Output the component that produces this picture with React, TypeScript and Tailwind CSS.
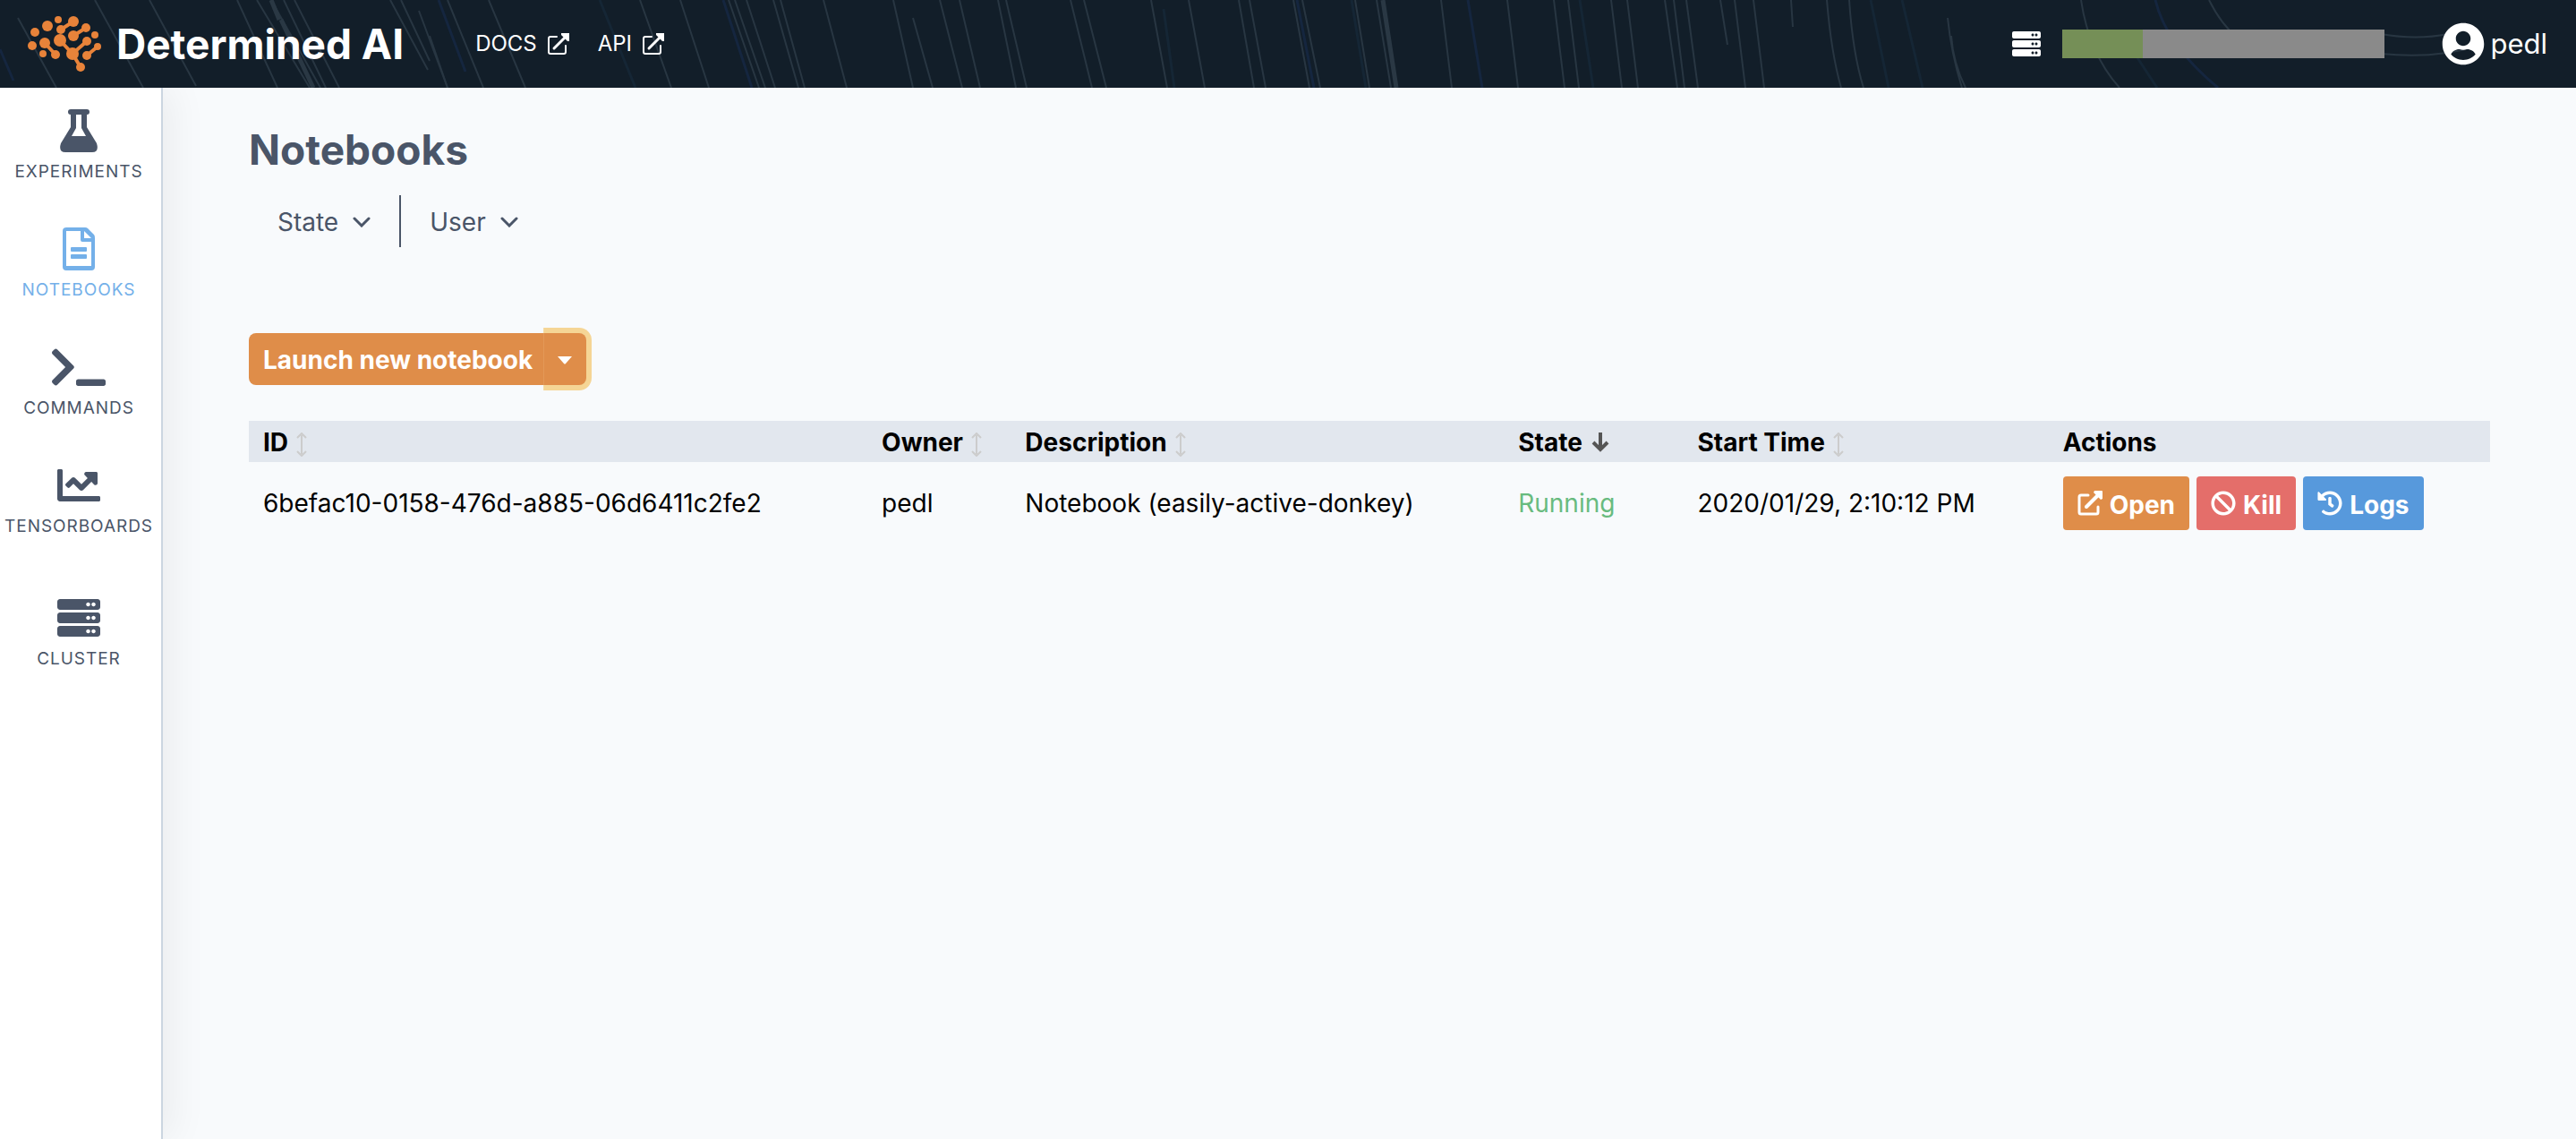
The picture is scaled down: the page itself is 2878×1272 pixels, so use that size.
import type { ReactNode } from "react";
import { FaServer, FaChartLine, FaTerminal, FaUserCircle, FaBan, FaHistory } from "react-icons/fa";

type IconProps = { className?: string };

function Logo({ className }: IconProps) {
  const dots: [number, number, number][] = [
    [65, 21, 4], [53, 28, 6], [82, 23, 6], [96, 30, 5], [68, 32, 5], [39, 35, 5],
    [106, 38, 4], [82, 39, 6], [36, 50, 5], [50, 47, 6], [67, 44, 7], [97, 45, 5],
    [109, 51, 4], [48, 59, 4], [62, 60, 5], [81, 59, 7], [97, 61, 5], [90, 74, 5],
  ];
  return (
    <svg viewBox="31 16 83 64" className={className} fill="#e8833a" stroke="#e8833a" aria-hidden="true">
      {dots.map(([x, y, r]) => (
        <circle key={`${x}-${y}`} cx={x} cy={y} r={r} strokeWidth="0" />
      ))}
      <path d="M82 23L68 32M96 30L82 39M50 47L62 60M67 44L81 59L97 45M81 59L90 74M109 51L97 61" strokeWidth="4" fill="none" />
    </svg>
  );
}

function External({ className }: IconProps) {
  return (
    <svg viewBox="0 0 24 24" className={className} fill="none" stroke="currentColor" aria-hidden="true">
      <path d="M10 4H3Q1 4 1 6V21Q1 23 3 23H18Q20 23 20 21V14" strokeWidth="2" strokeLinecap="round" />
      <path d="M7 17L21 3" strokeWidth="3" strokeLinecap="round" />
      <path d="M15 0H24V9H22L15 2Z" fill="currentColor" strokeWidth="0" />
    </svg>
  );
}

function ExternalBold({ className }: IconProps) {
  return (
    <svg viewBox="0 0 28 28" className={className} fill="none" stroke="currentColor" aria-hidden="true">
      <path d="M12 5H4Q2 5 2 7V24Q2 26 4 26H21Q23 26 23 24V18" strokeWidth="3" strokeLinecap="round" />
      <path d="M10 18L23 5" strokeWidth="4" strokeLinecap="round" />
      <path d="M19 0H27Q28 0 28 1V9L26 10L18 2Z" fill="currentColor" strokeWidth="0" />
    </svg>
  );
}

function Flask({ className }: IconProps) {
  return (
    <svg viewBox="0 0 42 48" className={className} fill="currentColor" aria-hidden="true">
      <path fillRule="evenodd" d="M12 0H30Q33 0 33 3Q33 6 30 6V20L41 38Q44 48 36 48H6Q-2 48 1 38L12 20V6Q9 6 9 3Q9 0 12 0ZM18 6V21L13 30H29L24 21V6Z" />
    </svg>
  );
}

function Doc({ className }: IconProps) {
  return (
    <svg viewBox="0 0 36 48" className={className} fill="currentColor" aria-hidden="true">
      <path fillRule="evenodd" d="M4 0H25Q27 0 28 1L35 8Q36 9 36 12V44Q36 48 32 48H4Q0 48 0 44V4Q0 0 4 0ZM4 4V43H32V16H22Q20 16 20 14V4ZM24 4V12H32Z" />
      <rect x="9" y="22" width="18" height="5" rx="1" />
      <rect x="9" y="30" width="18" height="5" rx="1" />
    </svg>
  );
}

function Chevron({ className }: IconProps) {
  return (
    <svg viewBox="0 0 20 12" className={className} fill="none" stroke="currentColor" strokeWidth="3" strokeLinecap="round" aria-hidden="true">
      <path d="M2 2L10 10L18 2" strokeLinejoin="miter" />
    </svg>
  );
}

function SortBoth() {
  return (
    <svg viewBox="0 0 14 27" className="mt-1 ml-2 h-[27px] w-3.5 shrink-0 text-[#cccccc]" fill="none" stroke="currentColor" strokeWidth="2" aria-hidden="true">
      <path d="M7 3V24" />
      <path d="M2 6L7 1L12 6M2 21L7 26L12 21" />
    </svg>
  );
}

function SortDown() {
  return (
    <svg viewBox="0 0 20 22" className="ml-2.5 h-[22px] w-5 shrink-0 text-[#555555]" fill="none" stroke="currentColor" strokeWidth="4" aria-hidden="true">
      <path d="M10 0V19M2 11L10 19L18 11" />
    </svg>
  );
}

const streaks = [
  "M106 0L160 98M167 0L219 96M20 20L63 98M287 0L346 98M303 0L358 98M317 0L364 98M329 0L379 98M265 0L310 98M436 0L478 78M448 0L480 68M468 12L500 98",
  "M500 0L540 98M480 40L500 98M546 0L587 98M715 0L750 98M760 0L792 98M814 0L848 98M821 0L855 98M834 0L866 98M864 0L892 98M872 0L899 98M920 0L946 98M998 0L1020 98M1020 20L1042 98M1050 0L1075 98M1072 0L1095 98M1115 0L1135 98M1124 0L1147 98",
  "M1196 0L1220 98M1211 0L1236 98M1286 0L1304 98M1328 0L1346 98M1384 0L1401 98M1396 0L1414 98M1445 0L1463 98M1455 0L1475 98M1514 0L1530 98M1538 0L1554 98M1610 0L1622 98M1684 0L1696 98M1736 0L1748 98M1752 0L1764 98M1800 0L1812 98M1818 0L1830 98M1860 0L1874 98M1870 0L1882 98M1884 0L1897 98M1922 0L1930 50M1938 0L1950 98M1959 0L1971 98M2001 0L2003 30",
  "M2041 0Q2046 60 2057 98M2066 0Q2070 60 2082 98M2176 20Q2180 60 2192 98M2325 0Q2334 60 2368 98M2180 40Q2182 70 2196 98M2468 0Q2482 28 2500 42M2660 38Q2700 45 2735 38M2660 60Q2720 66 2765 52",
];

function Streaks() {
  return (
    <svg viewBox="0 0 2878 98" preserveAspectRatio="none" className="absolute inset-0 h-full w-full" fill="none" aria-hidden="true">
      {streaks.map((d) => (
        <path key={d} d={d} stroke="#283642" strokeWidth="2" />
      ))}
      <path d="M303 0L312 22M314 22L350 98M1545 0L1560 98" stroke="#2a3844" strokeWidth="5" />
      <path d="M808 0L840 98M1449 0L1468 98M1640 0L1656 98M2408 0Q2420 50 2478 98M490 0L520 80M0 55L15 90" stroke="#15263f" strokeWidth="3" />
      <path d="M670 0L710 98M1300 10L1312 98M1510 0L1526 98M1765 0L1780 98M2090 0L2110 98M2125 0L2148 98M2385 60L2410 98" stroke="#152635" strokeWidth="3" />
    </svg>
  );
}

function NavItem({ label, active, tall, children }: { label: string; active?: boolean; tall?: boolean; children: ReactNode }) {
  return (
    <a href="#" className={`flex flex-col items-center ${tall ? "mt-4" : ""} ${active ? "text-[#74b0e9]" : "text-[#4a5568]"}`}>
      <span className="flex h-12 items-center">{children}</span>
      <span className="mt-2 mb-12 text-[19px] leading-7 tracking-wider">{label}</span>
    </a>
  );
}

const columns = [
  { name: "ID", sort: "both" },
  { name: "Owner", sort: "both" },
  { name: "Description", sort: "both" },
  { name: "State", sort: "down" },
  { name: "Start Time", sort: "both" },
  { name: "Actions", sort: "" },
];

export default function App() {
  return (
    <div className="flex min-h-screen flex-col bg-[#f8fafc] font-['Inter',sans-serif] text-[28px] leading-[42px] text-black">
      <header className="relative h-[98px] bg-[#121e29] text-white">
        <Streaks />
        <div className="relative flex h-full items-center pr-8 pl-[31px]">
          <Logo className="h-16 w-[83px]" />
          <span className="ml-4 text-[46px] font-bold">Determined AI</span>
          <nav className="ml-20 flex gap-8 text-2xl">
            <a href="#" className="flex items-center gap-3">DOCS <External className="size-6" /></a>
            <a href="#" className="flex items-center gap-3">API <External className="size-6" /></a>
          </nav>
          <FaServer className="mr-6 ml-auto size-8" />
          <div className="h-8 w-[360px] bg-[#8a8a8a]" role="img" aria-label="Cluster usage">
            <div className="h-full w-1/4 bg-[#758f57]" />
          </div>
          <button className="ml-16 flex items-center gap-1.5 text-[31px]">
            <FaUserCircle className="size-12" />
            pedl
          </button>
        </div>
      </header>
      <div className="flex flex-1">
        <aside className="w-[182px] shrink-0 border-r-2 border-[#cbd5e0] bg-white pt-6 pr-1 shadow-[10px_0_40px_rgba(0,0,0,0.06)]">
          <NavItem label="EXPERIMENTS"><Flask className="h-12 w-[42px]" /></NavItem>
          <NavItem label="NOTEBOOKS" active><Doc className="h-12 w-9" /></NavItem>
          <NavItem label="COMMANDS"><FaTerminal className="h-12 w-[60px]" /></NavItem>
          <NavItem label="TENSORBOARDS"><FaChartLine className="size-12" /></NavItem>
          <NavItem label="CLUSTER" tall><FaServer className="size-12" /></NavItem>
        </aside>
        <main className="flex-1 pt-10 pr-24 pl-24">
          <h1 className="text-[46px] leading-[58px] font-bold text-[#4a5568]">Notebooks</h1>
          <div className="mt-[22px] flex h-[58px] text-[#4a5568]">
            <button className="flex items-center gap-4 border-r-2 border-[#4a5568] px-8 pt-0.5">State <Chevron className="h-3 w-5" /></button>
            <button className="flex items-center gap-4 px-8 pt-0.5">User <Chevron className="h-3 w-5" /></button>
          </div>
          <div className="mt-24 flex h-[58px] text-white">
            <button className="rounded-l-lg bg-[#df8d49] pt-0.5 pr-3 pl-4 font-bold">Launch new notebook</button>
            <button aria-label="More launch options" className="flex w-12 items-center justify-center rounded-r-lg bg-[#df8d49] pt-0.5 shadow-[0_0_0_6px_#f5d595] [clip-path:inset(-6px_-6px_-6px_0)]">
              <svg viewBox="0 0 16 9" className="h-[9px] w-4" fill="currentColor" aria-hidden="true"><path d="M0 0H16L9 8Q8 9 7 8Z" /></svg>
            </button>
          </div>
          <table className="mt-10 w-full table-fixed text-left">
            <colgroup>
              <col className="w-[27.6%]" />
              <col className="w-[6.4%]" />
              <col className="w-[22%]" />
              <col className="w-[8%]" />
              <col className="w-[16.3%]" />
              <col />
            </colgroup>
            <thead className="bg-[#e2e7ee]">
              <tr>
                {columns.map((c) => (
                  <th key={c.name} className="h-[46px] pt-0.5 pl-4 font-bold whitespace-nowrap">
                    <span className="flex items-center">{c.name}{c.sort === "both" && <SortBoth />}{c.sort === "down" && <SortDown />}</span>
                  </th>
                ))}
              </tr>
            </thead>
            <tbody>
              <tr className="h-[92px] whitespace-nowrap">
                <td className="pl-4">6befac10-0158-476d-a885-06d6411c2fe2</td>
                <td className="pl-4">pedl</td>
                <td className="pl-4">Notebook (easily-active-donkey)</td>
                <td className="pl-4 text-[#68bb7f]">Running</td>
                <td className="pl-4">2020/01/29, 2:10:12 PM</td>
                <td className="pl-4">
                  <div className="flex gap-2 font-bold text-white">
                    <button className="flex h-[60px] items-center gap-2 rounded-sm bg-[#df8d49] px-4"><ExternalBold className="size-7" /><span className="pt-1">Open</span></button>
                    <button className="flex h-[60px] items-center gap-2 rounded-sm bg-[#e46e6a] px-4"><FaBan className="size-7" /><span className="pt-1">Kill</span></button>
                    <button className="flex h-[60px] items-center gap-2 rounded-sm bg-[#5799dc] px-4"><FaHistory className="size-7" /><span className="pt-1">Logs</span></button>
                  </div>
                </td>
              </tr>
            </tbody>
          </table>
        </main>
      </div>
    </div>
  );
}
